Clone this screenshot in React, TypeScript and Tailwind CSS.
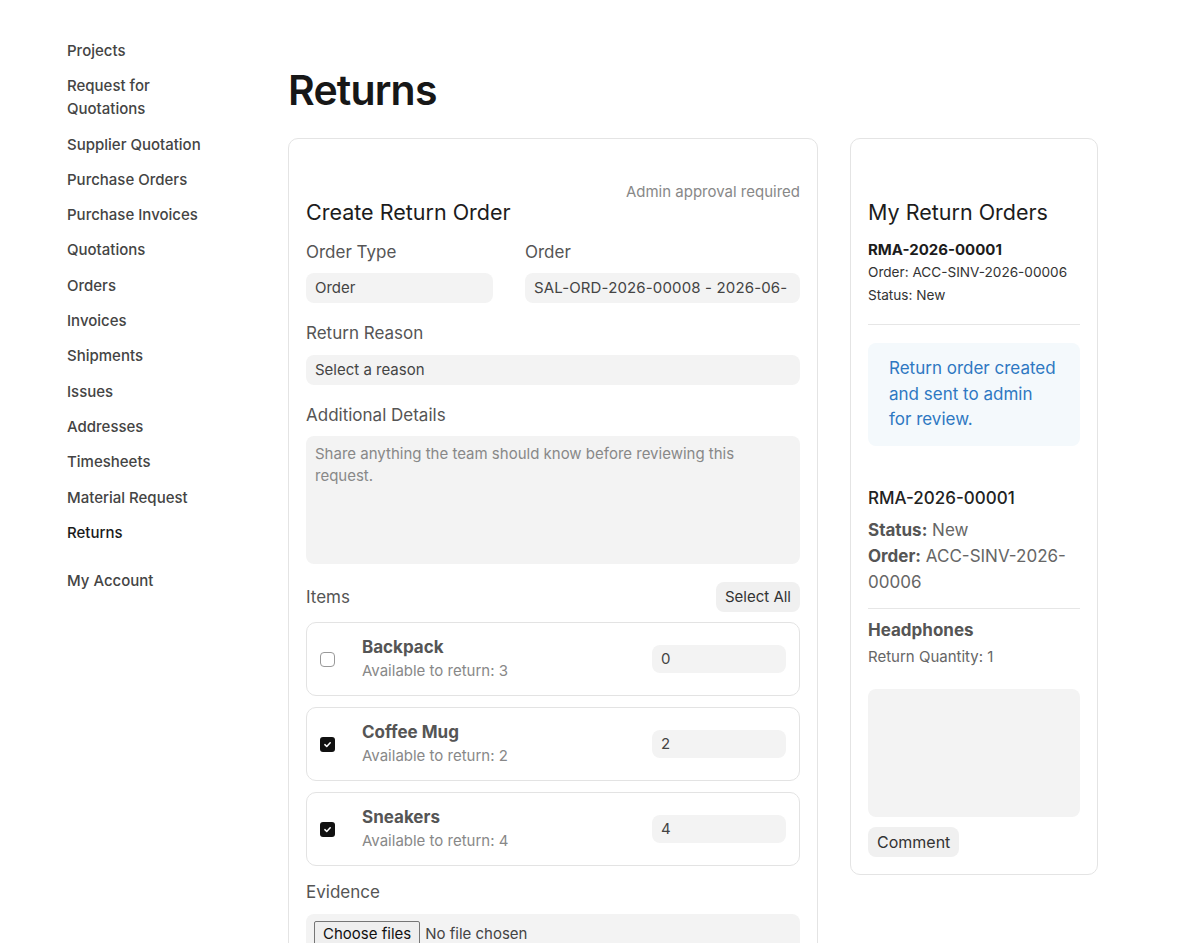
import { useState } from 'react'

const navItems = [
  'Projects',
  'Request for Quotations',
  'Supplier Quotation',
  'Purchase Orders',
  'Purchase Invoices',
  'Quotations',
  'Orders',
  'Invoices',
  'Shipments',
  'Issues',
  'Addresses',
  'Timesheets',
  'Material Request',
  'Returns',
]

const initialItems = [
  { name: 'Backpack', available: 3, qty: '0', checked: false },
  { name: 'Coffee Mug', available: 2, qty: '2', checked: true },
  { name: 'Sneakers', available: 4, qty: '4', checked: true },
]

function Checkbox({ checked, onClick }: { checked: boolean; onClick: () => void }) {
  return (
    <button
      onClick={onClick}
      className={
        checked
          ? 'flex h-[15px] w-[15px] items-center justify-center rounded-[3px] bg-[#111]'
          : 'h-[15px] w-[15px] rounded-[4px] border border-[#999] bg-white'
      }
    >
      {checked && (
        <svg width="9" height="9" viewBox="0 0 12 12" fill="none">
          <path d="M2.5 6.2L5 8.6L9.6 3.6" stroke="white" strokeWidth="2" strokeLinecap="round" strokeLinejoin="round" />
        </svg>
      )}
    </button>
  )
}

export default function App() {
  const [items, setItems] = useState(initialItems)

  const toggle = (i: number) =>
    setItems(items.map((it, idx) => (idx === i ? { ...it, checked: !it.checked } : it)))

  return (
    <div className="min-h-screen bg-white font-['Inter',sans-serif] text-[#222]">
      <div className="flex pl-[67px]">
        {/* Sidebar */}
        <nav className="w-[221px] shrink-0 pt-[39px]">
          <ul className="flex w-[150px] flex-col gap-[12.3px]">
            {navItems.map((item) => (
              <li
                key={item}
                className={
                  item === 'Returns'
                    ? 'text-[15px] font-medium leading-[23px] text-[#1a1a1a]'
                    : 'text-[15px] font-medium leading-[23px] text-[#444]'
                }
              >
                {item}
              </li>
            ))}
            <li className="mt-[12.7px] text-[15px] font-medium leading-[23px] text-[#444]">My Account</li>
          </ul>
        </nav>

        {/* Main */}
        <main className="pt-[66px]">
          <h1 className="text-[41px] font-semibold leading-[48px] tracking-[-0.02em] text-[#171717]">Returns</h1>

          <div className="mt-[24px] flex items-start gap-[32px]">
            {/* Create card */}
            <section className="w-[530px] rounded-[10px] border border-[#e4e4e4] px-[17px] pt-[43px] pb-[18px]">
              <p className="text-right text-[15px] leading-[20px] text-[#888]">Admin approval required</p>
              <h2 className="mt-[-4px] text-[21.5px] leading-[28px] text-[#1c1c1c]">Create Return Order</h2>

              <div className="mt-[14px] grid grid-cols-[187px_1fr] gap-x-[32px]">
                <div>
                  <label className="block text-[17px] leading-[24px] text-[#555]">Order Type</label>
                  <div className="mt-[9px] flex h-[30px] items-center rounded-[8px] bg-[#f3f3f3] px-[9px] text-[15px] text-[#444]">
                    Order
                  </div>
                </div>
                <div>
                  <label className="block text-[17px] leading-[24px] text-[#555]">Order</label>
                  <div className="mt-[9px] flex h-[30px] items-center overflow-hidden whitespace-nowrap rounded-[8px] bg-[#f3f3f3] px-[9px] text-[15px] tracking-[0.01em] text-[#444]">
                    SAL-ORD-2026-00008 - 2026-06-
                  </div>
                </div>
              </div>

              <label className="mt-[18px] block text-[17px] leading-[24px] text-[#555]">Return Reason</label>
              <div className="mt-[10px] flex h-[30px] items-center rounded-[8px] bg-[#f3f3f3] px-[9px] text-[15px] text-[#444]">
                Select a reason
              </div>

              <label className="mt-[18px] block text-[17px] leading-[24px] text-[#555]">Additional Details</label>
              <textarea
                className="mt-[9px] block h-[128px] w-full resize-none rounded-[8px] bg-[#f3f3f3] px-[9px] py-[7px] text-[15px] leading-[22px] text-[#444] outline-none placeholder:text-[#888]"
                placeholder="Share anything the team should know before reviewing this request."
              />

              <div className="mt-[18px] flex items-center justify-between">
                <span className="text-[17px] leading-[24px] text-[#555]">Items</span>
                <button className="h-[30px] rounded-[8px] bg-[#f0f0f0] px-[9px] text-[15px] text-[#333]">Select All</button>
              </div>

              <div className="mt-[10px] flex flex-col gap-[11px]">
                {items.map((it, i) => (
                  <div
                    key={it.name}
                    className="flex h-[74px] items-center rounded-[10px] border border-[#e3e3e3] pl-[13px] pr-[13px]"
                  >
                    <Checkbox checked={it.checked} onClick={() => toggle(i)} />
                    <div className="ml-[27px] flex-1">
                      <p className="text-[17px] font-bold leading-[22px] text-[#555]">{it.name}</p>
                      <p className="mt-[2px] text-[15px] leading-[22px] text-[#888]">Available to return: {it.available}</p>
                    </div>
                    <div className="flex h-[28px] w-[134px] items-center rounded-[8px] bg-[#f3f3f3] px-[9px] text-[15px] text-[#444]">
                      {it.qty}
                    </div>
                  </div>
                ))}
              </div>

              <label className="mt-[14px] block text-[17px] leading-[24px] text-[#555]">Evidence</label>
              <div className="mt-[10px] flex h-[40px] items-start rounded-[8px] bg-[#f3f3f3] px-[8px] pt-[7px] text-[15px]">
                <span className="rounded-[2px] border border-[#767676] bg-[#efefef] px-[8px] leading-[24px] text-[#111]">
                  Choose files
                </span>
                <span className="ml-[5px] leading-[26px] text-[#444]">No file chosen</span>
              </div>
            </section>

            {/* My returns card */}
            <aside className="w-[248px] rounded-[10px] border border-[#e4e4e4] px-[17px] pt-[59px] pb-[17px]">
              <h2 className="text-[21.5px] leading-[28px] text-[#1c1c1c]">My Return Orders</h2>
              <div className="mt-[12px] border-b border-[#e6e6e6] pb-[17px]">
                <p className="text-[15px] font-bold leading-[23px] text-[#1c1c1c]">RMA-2026-00001</p>
                <p className="text-[13.6px] leading-[23px] text-[#333]">Order: ACC-SINV-2026-00006</p>
                <p className="text-[13.6px] leading-[23px] text-[#333]">Status: New</p>
              </div>

              <div className="mt-[18px] rounded-[8px] bg-[#f4f9fc] px-[21px] py-[13px] text-[17px] leading-[25.5px] text-[#2e78c2]">
                Return order created and sent to admin for review.
              </div>

              <div className="mt-[40px] border-b border-[#e6e6e6] pb-[13px]">
                <p className="text-[17px] font-medium leading-[24px] text-[#222]">RMA-2026-00001</p>
                <p className="mt-[7px] text-[17px] leading-[26px] text-[#666]">
                  <span className="font-bold text-[#555]">Status:</span> New
                </p>
                <p className="text-[17px] leading-[26px] text-[#666]">
                  <span className="font-bold text-[#555]">Order:</span> ACC-SINV-2026-00006
                </p>
              </div>

              <p className="mt-[9px] text-[17px] font-bold leading-[24px] text-[#555]">Headphones</p>
              <p className="mt-[4px] text-[15px] leading-[22px] text-[#666]">Return Quantity: 1</p>

              <textarea className="mt-[21px] block h-[128px] w-full resize-none rounded-[8px] bg-[#f3f3f3] outline-none" />
              <button className="mt-[10px] h-[30px] rounded-[8px] bg-[#f0f0f0] px-[9px] text-[16px] text-[#333]">Comment</button>
            </aside>
          </div>
        </main>
      </div>
    </div>
  )
}
